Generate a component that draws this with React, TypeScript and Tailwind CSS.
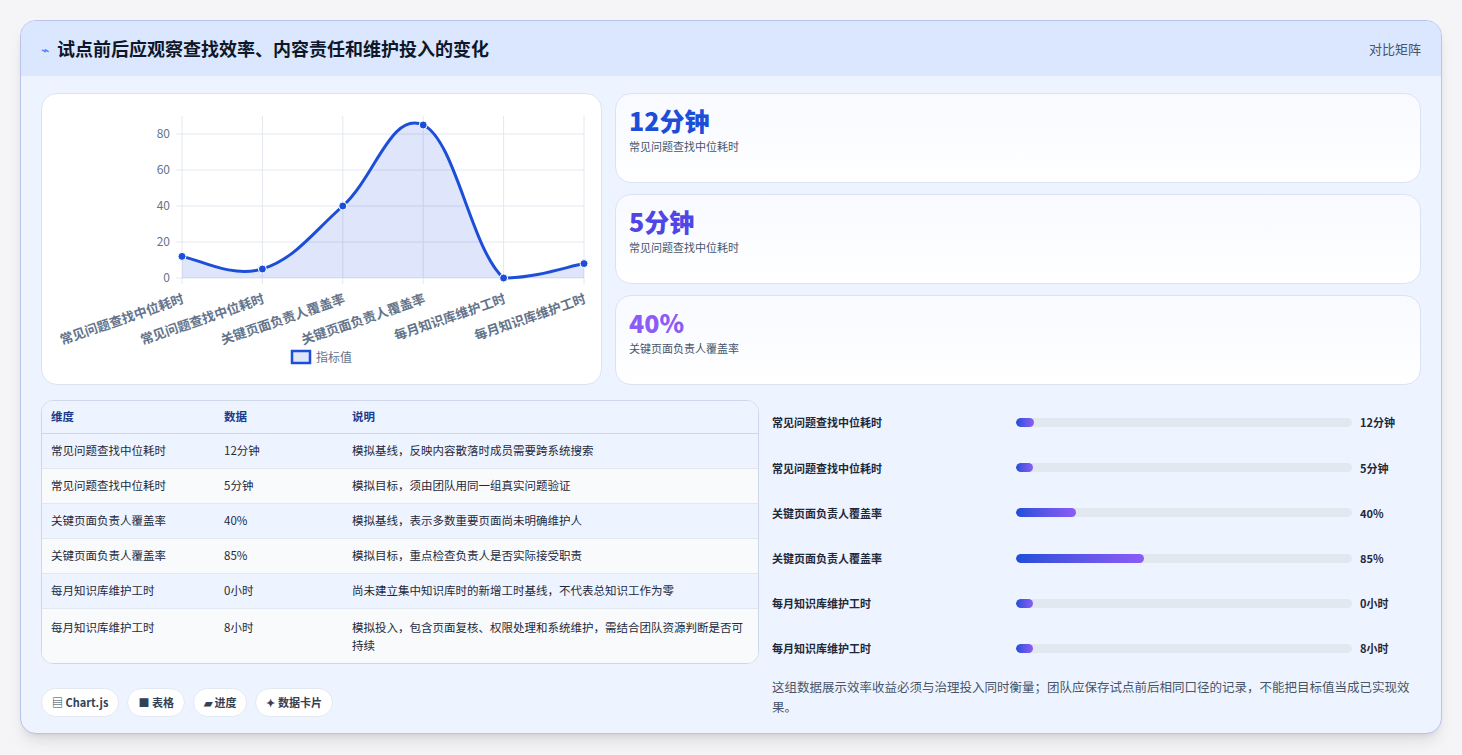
import React from "react";

const F = { fontFamily: '"Noto Sans CJK SC","Noto Sans",sans-serif' };

const labels = ["常见问题查找中位耗时","常见问题查找中位耗时","关键页面负责人覆盖率","关键页面负责人覆盖率","每月知识库维护工时","每月知识库维护工时"];
const vals = [12,5,40,85,0,8];
const disp = ["12分钟","5分钟","40%","85%","0小时","8小时"];
const notes = [
  "模拟基线，反映内容散落时成员需要跨系统搜索",
  "模拟目标，须由团队用同一组真实问题验证",
  "模拟基线，表示多数重要页面尚未明确维护人",
  "模拟目标，重点检查负责人是否实际接受职责",
  "尚未建立集中知识库时的新增工时基线，不代表总知识工作为零",
  "模拟投入，包含页面复核、权限处理和系统维护，需结合团队资源判断是否可持续",
];

function Chart() {
  const x0 = 140, x1 = 542, y0 = 184, k = 1.8;
  const pts = vals.map((v, i) => [x0 + (i * (x1 - x0)) / 5, y0 - v * k]);
  let d = `M${pts[0][0]},${pts[0][1]}`;
  for (let i = 0; i < pts.length - 1; i++) {
    const p0 = pts[Math.max(0, i - 1)], p1 = pts[i], p2 = pts[i + 1], p3 = pts[Math.min(pts.length - 1, i + 2)];
    const t = 0.2;
    const c1 = [p1[0] + (p2[0] - p0[0]) * t, Math.min(y0, p1[1] + (p2[1] - p0[1]) * t)];
    const c2 = [p2[0] - (p3[0] - p1[0]) * t, Math.min(y0, p2[1] - (p3[1] - p1[1]) * t)];
    d += ` C${c1[0]},${c1[1]} ${c2[0]},${c2[1]} ${p2[0]},${p2[1]}`;
  }
  const area = d + ` L${x1},${y0} L${x0},${y0} Z`;
  return (
    <svg width="561" height="292" viewBox="0 0 561 292" style={F}>
      {[0, 20, 40, 60, 80].map((v) => (
        <g key={v}>
          <line x1={x0 - 6} x2={x1} y1={y0 - v * k} y2={y0 - v * k} stroke="#e2e8f0" />
          <text x={x0 - 12} y={y0 - v * k + 4} textAnchor="end" fontSize="12" fill="#64748b">{v}</text>
        </g>
      ))}
      {pts.map((p, i) => (
        <g key={i}>
          <line x1={p[0]} x2={p[0]} y1={22} y2={y0 + 6} stroke="#e2e8f0" />
          <text transform={`translate(${p[0]},${y0 + 16}) rotate(-19)`} textAnchor="end" fontSize="13" fontWeight="600" fill="#64748b" dy="9">{labels[i]}</text>
        </g>
      ))}
      <path d={area} fill="rgba(37,78,219,0.15)" />
      <path d={d} fill="none" stroke="#1d4ed8" strokeWidth="3" />
      {pts.map((p, i) => <circle key={i} cx={p[0]} cy={p[1]} r="4" fill="#1d4ed8" stroke="#fff" strokeWidth="1" />)}
      <rect x={250} y={257} width={18} height={12} fill="rgba(37,78,219,0.15)" stroke="#1d4ed8" strokeWidth="2.5" />
      <text x={274} y={268} fontSize="12" fill="#64748b">指标值</text>
    </svg>
  );
}

export default function App() {
  return (
    <div className="min-h-screen bg-[#f5f5f7] p-5" style={F}>
      <div className="rounded-2xl border border-[#b8c4ec] bg-[#eef4ff] overflow-hidden shadow-lg h-[714px] flex flex-col">
        <div className="h-[55px] shrink-0 flex items-center justify-between px-5 bg-[#dbe7ff]">
          <div className="flex items-center gap-2">
            <span className="text-[#3b82f6] text-sm">⌁</span>
            <span className="text-[18px] font-bold text-[#0f172a]">试点前后应观察查找效率、内容责任和维护投入的变化</span>
          </div>
          <span className="text-[13px] text-[#475569]">对比矩阵</span>
        </div>
        <div className="flex-1 p-5 pt-[17px] flex flex-col gap-[15px]">
          <div className="flex gap-[13px] h-[292px] shrink-0">
            <div className="w-[561px] bg-white rounded-2xl border border-[#dbe3f3]"><Chart /></div>
            <div className="flex-1 flex flex-col gap-[11px]">
              {[["12分钟","text-[#1d4ed8]","常见问题查找中位耗时"],["5分钟","text-[#4f46e5]","常见问题查找中位耗时"],["40%","text-[#8b5cf6]","关键页面负责人覆盖率"]].map(([v,c,l],i)=>(
                <div key={i} className="flex-1 rounded-2xl border border-[#dbe3f3] bg-gradient-to-b from-[#f8faff] to-white px-[13px] pt-[10px]">
                  <div className={`text-[25px] font-extrabold leading-[32px] ${c}`}>{v}</div>
                  <div className="text-[11px] text-[#475569] mt-[2px]">{l}</div>
                </div>
              ))}
            </div>
          </div>
          <div className="flex gap-[13px]">
            <div className="w-[718px]">
              <div className="rounded-xl border border-[#cfd8ea] overflow-hidden bg-white">
                <div className="grid grid-cols-[173px_128px_1fr] h-[33px] items-center bg-[#eef4ff] border-b border-[#cfd8ea] text-[11.5px] font-semibold text-[#1e3a8a] px-[9px]">
                  <div>维度</div><div>数据</div><div>说明</div>
                </div>
                {labels.map((l, i) => (
                  <div key={i} className={`grid grid-cols-[173px_128px_1fr] px-[9px] text-[11.5px] text-[#1e293b] ${i%2===0?"bg-[#eef4ff]":"bg-[#f8fafc]"} ${i<5?"border-b border-[#e2e8f0] h-[35px] items-center":"py-[9px] leading-[18px]"}`}>
                    <div>{l}</div><div>{disp[i]}</div><div className="pr-[6px]">{notes[i]}</div>
                  </div>
                ))}
              </div>
              <div className="flex gap-[8px] mt-[24px]">
                {["▤ Chart.js","■ 表格","▰ 进度","✦ 数据卡片"].map((c) => (
                  <span key={c} className="h-[29px] px-[10px] flex items-center rounded-full bg-white border border-[#e2e8f0] text-[11px] font-semibold text-[#334155]">{c}</span>
                ))}
              </div>
            </div>
            <div className="flex-1 flex flex-col">
              <div className="flex flex-col">
                {labels.map((l, i) => {
                  const w = Math.max(5, (vals[i] / 224) * 100);
                  return (
                    <div key={i} className="h-[45.2px] flex items-center text-[11px] font-semibold text-[#1e293b]">
                      <div className="w-[244px]">{l}</div>
                      <div className="w-[336px] h-[9px] rounded-full bg-[#e2e8f0] overflow-hidden">
                        <div className="h-full rounded-full bg-gradient-to-r from-[#1d4ed8] to-[#8b5cf6]" style={{ width: `${w}%` }} />
                      </div>
                      <div className="ml-[8px]">{disp[i]}</div>
                    </div>
                  );
                })}
              </div>
              <p className="mt-[6px] text-[12.5px] leading-[20px] text-[#475569] pr-[2px]">这组数据展示效率收益必须与治理投入同时衡量；团队应保存试点前后相同口径的记录，不能把目标值当成已实现效果。</p>
            </div>
          </div>
        </div>
      </div>
    </div>
  );
}
